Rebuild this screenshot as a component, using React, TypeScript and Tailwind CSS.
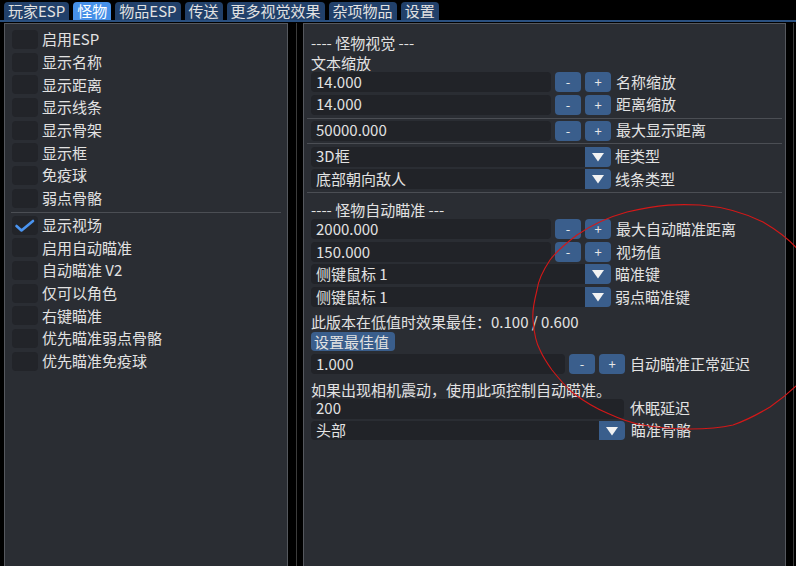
import React from 'react';

// Tab strip along the top of the overlay window
const tabs = [
  { name: '玩家ESP', active: false },
  { name: '怪物', active: true },
  { name: '物品ESP', active: false },
  { name: '传送', active: false },
  { name: '更多视觉效果', active: false },
  { name: '杂项物品', active: false },
  { name: '设置', active: false },
];

const groupA = ['启用ESP', '显示名称', '显示距离', '显示线条', '显示骨架', '显示框', '免疫球', '弱点骨骼'];
const groupB = [
  { name: '显示视场', on: true },
  { name: '启用自动瞄准', on: false },
  { name: '自动瞄准 V2', on: false },
  { name: '仅可以角色', on: false },
  { name: '右键瞄准', on: false },
  { name: '优先瞄准弱点骨骼', on: false },
  { name: '优先瞄准免疫球', on: false },
];

const Check = ({ label, on }: { label: string; on?: boolean }) => (
  <div className="flex items-center h-[22.7px] gap-[4px] pl-[4px]">
    <div className="w-[26px] h-[19px] rounded-[4px] bg-[#222429] flex items-center justify-center">
      {on && (
        <svg width="26" height="19" viewBox="0 0 26 19">
          <path d="M4.5 10 L9.5 14.5 L21 5" fill="none" stroke="#4a94f0" strokeWidth="2.6" strokeLinecap="round" strokeLinejoin="round" />
        </svg>
      )}
    </div>
    <span>{label}</span>
  </div>
);

const Btn = ({ children }: { children: React.ReactNode }) => (
  <div className="w-[26px] h-full rounded-[4px] bg-[#3a5e8c] flex items-center justify-center text-[13px] text-[#e8e8e8]">
    {children}
  </div>
);

const Stepper = ({ value, label, inputW, className = '' }: { value: string; label: string; inputW: string; className?: string }) => (
  <div className={`flex items-center h-[20px] gap-[4px] ${className}`}>
    <div className={`${inputW} h-full rounded-[4px] bg-[#212328] pl-[5px] flex items-center`}>{value}</div>
    <Btn>-</Btn>
    <Btn>+</Btn>
    <span className="ml-[1px]">{label}</span>
  </div>
);

const Arrow = () => (
  <div className="w-[26px] h-full rounded-r-[4px] bg-[#3a5e8c] flex items-center justify-center">
    <svg width="14" height="10" viewBox="0 0 14 10">
      <polygon points="1,1 13,1 7,9.5" fill="#f2f2f2" />
    </svg>
  </div>
);

const Combo = ({ value, label, boxW, className = '' }: { value: string; label: string; boxW: string; className?: string }) => (
  <div className={`flex items-center h-[20px] ${className}`}>
    <div className={`${boxW} h-full rounded-l-[4px] bg-[#212328] pl-[5px] flex items-center`}>{value}</div>
    <Arrow />
    <span className="ml-[4px]">{label}</span>
  </div>
);

const Sep = ({ className = '' }: { className?: string }) => <div className={`h-px bg-[#4b4e54] mx-[3px] ${className}`} />;

export default function App() {
  return (
    <div className="relative w-[796px] h-[566px] overflow-hidden bg-black text-[15px] text-[#e2e2e2] font-['Noto_Sans_CJK_SC','Noto_Sans',sans-serif]">
      {/* tab bar */}
      <div className="flex items-end gap-[4px] pl-[4px] h-[20px]">
        {tabs.map((t) => (
          <div
            key={t.name}
            className={`h-[18px] px-[4px] rounded-t-[4px] leading-[18px] whitespace-nowrap ${t.active ? 'bg-[#4690e8] text-white' : 'bg-[#21406a]'}`}
          >
            {t.name}
          </div>
        ))}
      </div>
      <div className="h-[2px] bg-[#2a5080]" />

      <div className="flex items-start pt-[1px]">
        {/* left column: toggles */}
        <div className="ml-[4px] w-[284px] h-[560px] border border-[#55585e] bg-[#2a2d33] px-[3px] pt-[4.2px]">
          {groupA.map((n) => (
            <Check key={n} label={n} />
          ))}
          <Sep className="mt-[2.5px] mx-0" />
          <div className="mt-[0.7px]">
            {groupB.map((g) => (
              <Check key={g.name} label={g.name} on={g.on} />
            ))}
          </div>
        </div>

        <div className="ml-[8px] w-px h-[560px] bg-[#3c3c3c]" />

        {/* right column: monster settings */}
        <div className="ml-[6px] w-[483px] h-[560px] border border-[#55585e] bg-[#2a2d33] flex flex-col">
          <div className="px-[7px] pt-[9px] flex flex-col">
            <div className="h-[19px] leading-[19px]">---- 怪物视觉 ---</div>
            <div className="h-[19px] leading-[19px] mt-[1px]">文本缩放</div>
            <Stepper value="14.000" label="名称缩放" inputW="w-[240px]" />
            <Stepper value="14.000" label="距离缩放" inputW="w-[240px]" className="mt-[2.5px]" />
          </div>
          <Sep className="mt-[3.5px]" />
          <div className="px-[7px] flex flex-col">
            <Stepper value="50000.000" label="最大显示距离" inputW="w-[240px]" className="mt-[1.5px]" />
          </div>
          <Sep className="mt-[2.8px]" />
          <div className="px-[7px] flex flex-col">
            <Combo value="3D框" label="框类型" boxW="w-[274px]" className="mt-[2.4px]" />
            <Combo value="底部朝向敌人" label="线条类型" boxW="w-[274px]" className="mt-[2.5px]" />
          </div>
          <Sep className="mt-[3px]" />
          <div className="px-[7px] flex flex-col">
            <div className="h-[19px] leading-[19px] mt-[7px]">---- 怪物自动瞄准 ---</div>
            <Stepper value="2000.000" label="最大自动瞄准距离" inputW="w-[240px]" />
            <Stepper value="150.000" label="视场值" inputW="w-[240px]" className="mt-[2.7px]" />
            <Combo value="侧键鼠标 1" label="瞄准键" boxW="w-[274px]" className="mt-[2.3px]" />
            <Combo value="侧键鼠标 1" label="弱点瞄准键" boxW="w-[274px]" className="mt-[3px]" />
            <div className="h-[19px] leading-[19px] mt-[5px]">此版本在低值时效果最佳：0.100 / 0.600</div>
            <div className="mt-[1px] h-[19px] w-[84px] rounded-[4px] bg-[#3a5e8c] leading-[19px] pl-[3px]">设置最佳值</div>
            <Stepper value="1.000" label="自动瞄准正常延迟" inputW="w-[254px]" className="mt-[3px]" />
            <div className="h-[19px] leading-[19px] mt-[5.5px]">如果出现相机震动，使用此项控制自动瞄准。</div>
            <div className="flex items-center h-[20px]">
              <div className="w-[313px] h-full rounded-[4px] bg-[#212328] pl-[5px] flex items-center">200</div>
              <span className="ml-[6px]">休眠延迟</span>
            </div>
            <div className="flex items-center h-[19px] mt-[2.5px]">
              <div className="w-[288px] h-full rounded-l-[4px] bg-[#212328] pl-[5px] flex items-center">头部</div>
              <Arrow />
              <span className="ml-[6px]">瞄准骨骼</span>
            </div>
          </div>
        </div>

        <div className="ml-[7px] w-px h-[560px] bg-[#3c3c3c]" />
      </div>

      {/* red hand-drawn circle annotation over the panel */}
      <svg className="absolute inset-0 pointer-events-none" width="796" height="566" viewBox="0 0 796 566">
        <path
          d="M800 252 C792 242 780 232 763 222 C745 213 725 207 700 205 C680 204 660 204 627 212 C605 218 590 226 577 235 C565 244 556 252 550 260 C542 272 538 282 537 290 C534 302 532 312 533 320 C534 332 536 343 540 350 C543 357 547 363 552 370 C560 380 565 386 573 393 C585 402 595 408 607 413 C620 419 630 423 643 425 C660 428 675 429 690 429 C705 429 720 428 733 425 C750 419 760 413 770 407 C780 400 788 394 800 382"
          fill="none"
          stroke="#d41818"
          strokeWidth="1.1"
        />
      </svg>
    </div>
  );
}
